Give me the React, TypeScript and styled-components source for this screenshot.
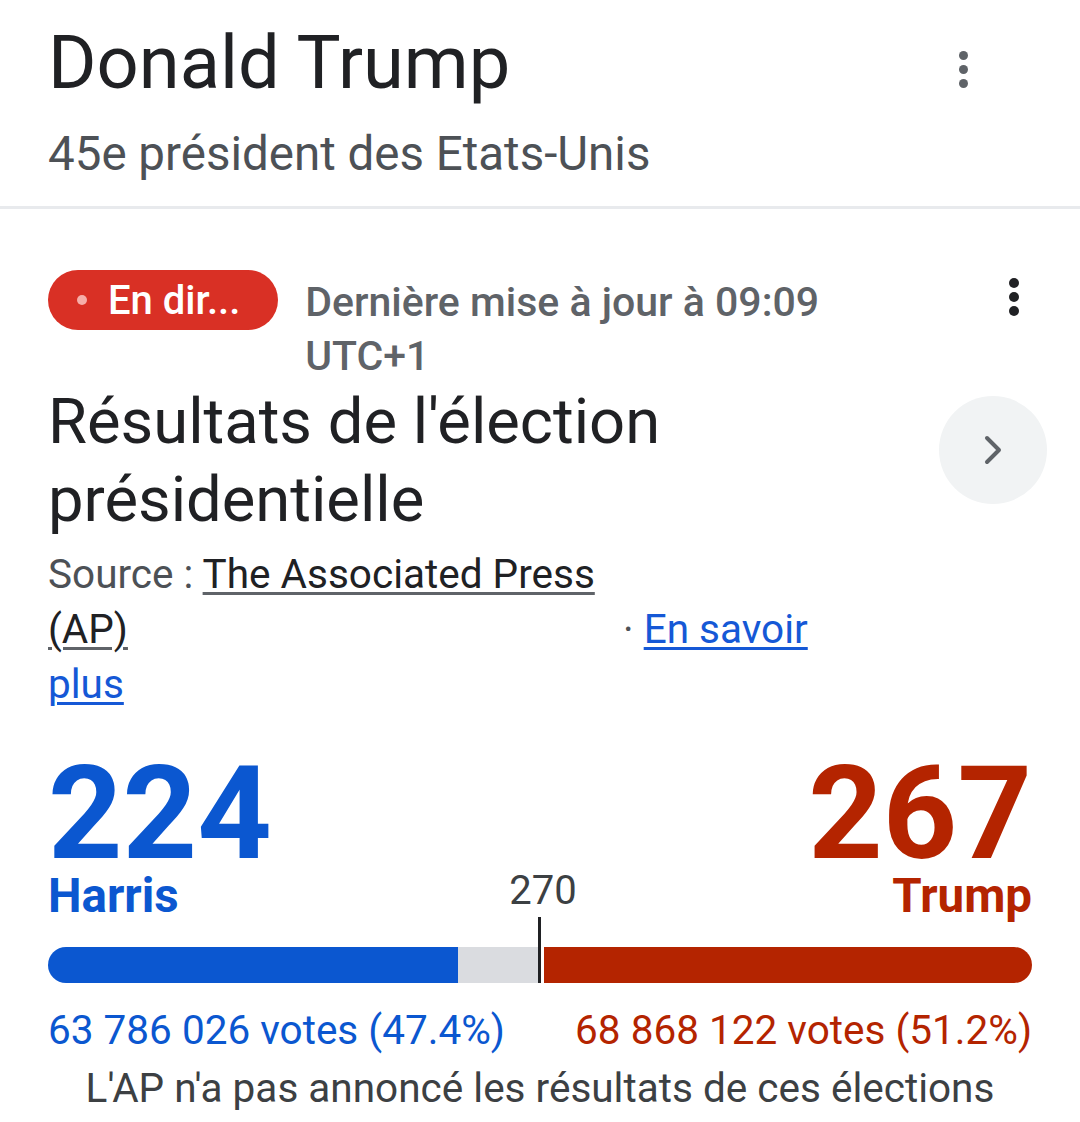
import styled, { createGlobalStyle } from "styled-components";
import { ChevronRight } from "lucide-react";

const GlobalStyle = createGlobalStyle`
  body {
    margin: 0;
    background: #fff;
    font-family: Roboto, "Liberation Sans", Arial, sans-serif;
    color: #202124;
  }
`;

const Page = styled.div`
  width: 1080px;
`;

const Header = styled.header`
  padding: 23px 48px 24px 48px;
  border-bottom: 3px solid #e8eaed;
`;

const TitleRow = styled.div`
  display: flex;
  justify-content: space-between;
  align-items: center;
`;

const Name = styled.h1`
  margin: 0;
  font-size: 74px;
  line-height: 80px;
  font-weight: 400;
  color: #202124;
`;

const HeaderMenu = styled.div`
  margin: 12px 64px 0 0;
`;

const Subtitle = styled.div`
  margin-top: 23px;
  font-size: 47.5px;
  line-height: 56px;
  color: #4d5156;
`;

const Dots = styled.div<{ color: string; size: number; gap: number }>`
  display: flex;
  flex-direction: column;
  gap: ${(p) => p.gap}px;
  span {
    display: block;
    width: ${(p) => p.size}px;
    height: ${(p) => p.size}px;
    border-radius: 50%;
    background: ${(p) => p.color};
  }
`;

const Card = styled.section`
  padding: 61px 48px 0 48px;
`;

const TopRow = styled.div`
  display: flex;
  align-items: flex-start;
`;

const LivePill = styled.div`
  flex-shrink: 0;
  display: flex;
  align-items: center;
  gap: 21px;
  height: 60px;
  padding: 0 38px 0 29px;
  border-radius: 30px;
  background: #d93025;
  color: #fff;
  font-size: 40px;
  font-weight: 500;
`;

const LiveDot = styled.span`
  width: 10px;
  height: 10px;
  border-radius: 50%;
  background: #f6aea9;
`;

const Meta = styled.div`
  margin: 5px 0 0 27px;
  width: 560px;
  font-size: 41px;
  line-height: 54px;
  font-weight: 500;
  color: #5f6368;
`;

const MenuSlot = styled.div`
  margin-left: auto;
  margin-top: 8px;
  margin-right: 13px;
`;

const HeadingRow = styled.div`
  margin-top: -1px;
  display: flex;
  align-items: flex-start;
  justify-content: space-between;
`;

const Heading = styled.h2`
  margin: 0;
  width: 820px;
  font-size: 63.3px;
  line-height: 78px;
  font-weight: 400;
  color: #202124;
`;

const RoundButton = styled.button`
  margin-top: 14px;
  margin-right: -15px;
  width: 108px;
  height: 108px;
  border: none;
  border-radius: 50%;
  background: #f1f3f4;
  display: flex;
  align-items: center;
  justify-content: center;
  color: #5f6368;
  padding: 0;
`;

const Source = styled.div`
  margin-top: 9px;
  width: 830px;
  font-size: 40.5px;
  line-height: 55px;
  color: #4d5156;
`;

const SourceBox = styled.span`
  display: inline-block;
  width: 565px;
  vertical-align: baseline;
`;

const Link = styled.a<{ tone: string; line: string }>`
  color: ${(p) => p.tone};
  text-decoration: underline;
  text-decoration-color: ${(p) => p.line};
  text-decoration-thickness: 3px;
  text-underline-offset: 4px;
`;

const Scores = styled.div`
  margin-top: 47px;
  display: grid;
  grid-template-columns: 1fr auto 1fr;
  align-items: end;
`;

const Side = styled.div<{ align: string; tone: string }>`
  display: flex;
  flex-direction: column;
  align-items: ${(p) => p.align};
  color: ${(p) => p.tone};
`;

const BigCount = styled.div`
  font-size: 130px;
  line-height: 110px;
  font-weight: 700;
`;

const Candidate = styled.div`
  margin-top: 2px;
  font-size: 47.5px;
  line-height: 50px;
  font-weight: 700;
`;

const Threshold = styled.div`
  font-size: 40px;
  line-height: 50px;
  color: #3c4043;
  padding: 0 0 5px 6px;
`;

const Bar = styled.div`
  position: relative;
  margin-top: 26px;
  height: 36px;
  display: flex;
`;

const Segment = styled.div<{ tone: string; first?: boolean; last?: boolean }>`
  height: 100%;
  background: ${(p) => p.tone};
  border-radius: ${(p) => (p.first ? "18px 0 0 18px" : p.last ? "0 18px 18px 0" : "0")};
`;

const Tick = styled.div`
  position: absolute;
  left: calc(50% - 2px);
  bottom: 0;
  width: 3px;
  height: 66px;
  background: #202124;
  box-shadow: 2px 0 0 #fff;
`;

const Votes = styled.div`
  margin-top: 23px;
  display: flex;
  justify-content: space-between;
  font-size: 40.5px;
  line-height: 48px;
`;

const VoteText = styled.span<{ tone: string }>`
  color: ${(p) => p.tone};
`;

const Note = styled.div`
  margin-top: 6px;
  text-align: center;
  font-size: 40.5px;
  line-height: 56px;
  color: #3c4043;
`;

const BLUE = "#0b57d0";
const RED = "#b42400";

function MenuDots({ color, size, gap }: { color: string; size: number; gap: number }) {
  return (
    <Dots color={color} size={size} gap={gap}>
      <span />
      <span />
      <span />
    </Dots>
  );
}

export default function App() {
  const total = 538;
  const harris = 224;
  const trump = 267;
  return (
    <Page>
      <GlobalStyle />
      <Header>
        <TitleRow>
          <Name>Donald Trump</Name>
          <HeaderMenu>
            <MenuDots color="#5f6368" size={9} gap={5} />
          </HeaderMenu>
        </TitleRow>
        <Subtitle>45e président des Etats-Unis</Subtitle>
      </Header>
      <Card>
        <TopRow>
          <LivePill>
            <LiveDot />
            En dir...
          </LivePill>
          <Meta>Dernière mise à jour à 09:09 UTC+1</Meta>
          <MenuSlot>
            <MenuDots color="#202124" size={10} gap={4} />
          </MenuSlot>
        </TopRow>
        <HeadingRow>
          <Heading>Résultats de l'élection présidentielle</Heading>
          <RoundButton aria-label="Suivant">
            <ChevronRight size={48} strokeWidth={2} />
          </RoundButton>
        </HeadingRow>
        <Source>
          <SourceBox>
            Source : <Link tone="#202124" line="#5f6368">The Associated Press (AP)</Link>
          </SourceBox>{" "}
          · <Link tone="#1558d6" line="#1558d6">En savoir plus</Link>
        </Source>
        <Scores>
          <Side align="flex-start" tone={BLUE}>
            <BigCount>{harris}</BigCount>
            <Candidate>Harris</Candidate>
          </Side>
          <Threshold>270</Threshold>
          <Side align="flex-end" tone={RED}>
            <BigCount>{trump}</BigCount>
            <Candidate>Trump</Candidate>
          </Side>
        </Scores>
        <Bar>
          <Segment tone={BLUE} first style={{ width: `${(harris / total) * 100}%` }} />
          <Segment tone="#dadce0" style={{ width: `${50 - (harris / total) * 100}%` }} />
          <Segment tone="#fff" style={{ width: `${50 - (trump / total) * 100}%` }} />
          <Segment tone={RED} last style={{ width: `${(trump / total) * 100}%` }} />
          <Tick />
        </Bar>
        <Votes>
          <VoteText tone={BLUE}>63 786 026 votes (47.4%)</VoteText>
          <VoteText tone={RED}>68 868 122 votes (51.2%)</VoteText>
        </Votes>
        <Note>L'AP n'a pas annoncé les résultats de ces élections</Note>
      </Card>
    </Page>
  );
}
